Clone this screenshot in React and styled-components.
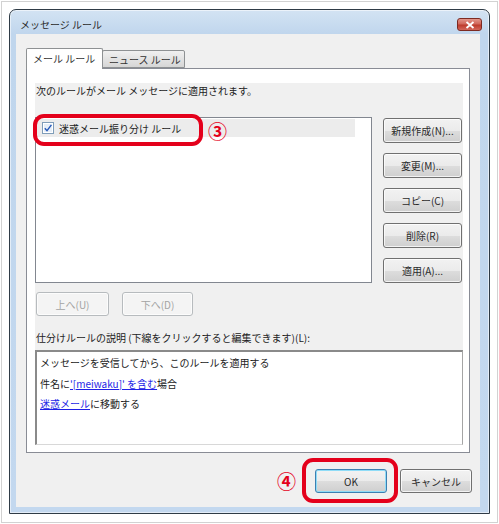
import React from "react";
import styled, { createGlobalStyle } from "styled-components";

const GlobalStyle = createGlobalStyle`
  html, body {
    margin: 0;
    padding: 0;
    background: #fff;
  }
  body {
    font-family: "Noto Sans CJK JP", "Noto Sans", sans-serif;
    font-size: 10px;
    color: #222;
  }
`;

const Page = styled.div`
  box-sizing: border-box;
  width: 497px;
  height: 522px;
  margin: 1px;
  border: 1px solid #d2d2d2;
  padding: 7px;
`;

const Window = styled.div`
  box-sizing: border-box;
  width: 481px;
  height: 505px;
  border: 1px solid #2f3b46;
  border-radius: 7px 7px 0 0;
  background: linear-gradient(180deg, #d3e3f3 0px, #c0d6ed 24px, #c3d8ef 100%);
  box-shadow: inset 0 0 0 1px rgba(255, 255, 255, 0.55);
  display: flex;
  flex-direction: column;
`;

const TitleBar = styled.div`
  height: 24px;
  display: flex;
  justify-content: space-between;
  align-items: flex-start;
  padding-left: 10px;
`;

const Title = styled.span`
  padding-top: 8px;
  line-height: 14px;
  color: #2a2a2a;
`;

const CloseButton = styled.div`
  width: 25px;
  height: 13px;
  margin: 8px 7px 0 0;
  box-sizing: border-box;
  border: 1px solid #7d2a22;
  border-radius: 3px;
  background: linear-gradient(180deg, #e3958a 0%, #d0675a 45%, #bd3b2c 55%, #d3675a 100%);
  display: flex;
  align-items: center;
  justify-content: center;
`;

const Body = styled.div`
  flex: 1;
  margin: 0 9px 6px 6px;
  background: #f0f0f0;
  padding: 14px 10px 0 10px;
  display: flex;
  flex-direction: column;
`;

const TabRow = styled.div`
  display: flex;
  align-items: flex-end;
  height: 20px;
  position: relative;
  z-index: 1;
`;

const Tab = styled.div`
  box-sizing: border-box;
  width: ${(p) => p.$width}px;
  height: ${(p) => (p.$active ? 21 : 18)}px;
  margin-bottom: ${(p) => (p.$active ? -1 : 0)}px;
  margin-left: ${(p) => (p.$active ? 0 : -1)}px;
  border: 1px solid #8e9193;
  border-bottom: ${(p) => (p.$active ? "none" : "1px solid #8e9193")};
  border-radius: 2px 2px 0 0;
  background: ${(p) =>
    p.$active ? "#fff" : "linear-gradient(180deg, #f0f0f0 0%, #e3e3e3 50%, #d6d6d6 100%)"};
  padding-left: 6px;
  line-height: ${(p) => (p.$active ? 19 : 17)}px;
  color: #333;
  white-space: nowrap;
`;

const Panel = styled.div`
  box-sizing: border-box;
  width: 444px;
  height: 385px;
  border: 1px solid #898c95;
  background: #fff;
  padding: 14px 6px 7px 8px;
`;

const Inner = styled.div`
  height: 362px;
  background: #f0f0f0;
  display: flex;
  flex-direction: column;
`;

const Caption = styled.div`
  height: ${(p) => p.$h || 14}px;
  margin-top: ${(p) => p.$mt || 0}px;
  padding: ${(p) => p.$pt || 0}px 1px 0;
  box-sizing: border-box;
  line-height: 14px;
  color: #222;
  white-space: nowrap;
`;

const ListRow = styled.div`
  display: flex;
  height: 166px;
`;

const ListBox = styled.div`
  position: relative;
  box-sizing: border-box;
  width: 337px;
  height: 166px;
  border: 1px solid #828790;
  background: #fff;
  padding: 1px;
`;

const Item = styled.div`
  width: 318px;
  height: 18px;
  background: #ececec;
  display: flex;
  align-items: center;
  gap: 5px;
  padding-left: 5px;
  box-sizing: border-box;
  color: #222;
`;

const Ring = styled.div`
  position: absolute;
  box-sizing: border-box;
  left: ${(p) => p.$x}px;
  top: ${(p) => p.$y}px;
  width: ${(p) => p.$w}px;
  height: ${(p) => p.$h}px;
  border: 4px solid #e4001b;
  border-radius: 11px;
  pointer-events: none;
`;

const Marker = styled.span`
  position: absolute;
  left: ${(p) => p.$x}px;
  top: ${(p) => p.$y}px;
  font-family: "Noto Sans CJK JP", "DejaVu Sans", sans-serif;
  font-size: 19px;
  font-weight: 700;
  line-height: 19px;
  color: #e4001b;
`;

const SideButtons = styled.div`
  margin-left: 11px;
  padding-top: 1px;
  display: flex;
  flex-direction: column;
  gap: 10px;
`;

const Button = styled.button`
  box-sizing: border-box;
  width: ${(p) => p.$w || 79}px;
  height: ${(p) => p.$h || 25}px;
  padding: 0;
  border: 1px solid ${(p) => (p.$disabled ? "#b7bbbe" : p.$focus ? "#3c7fb1" : "#707070")};
  border-radius: 3px;
  background: ${(p) =>
    p.$disabled
      ? "#f4f4f4"
      : "linear-gradient(180deg, #f2f2f2 0%, #ebebeb 50%, #dddddd 51%, #cfcfcf 100%)"};
  box-shadow: inset 0 0 0 1px ${(p) => (p.$focus ? "#8fdcf7" : "rgba(255,255,255,0.75)")};
  font-family: inherit;
  font-size: 10px;
  color: ${(p) => (p.$disabled ? "#a3a3a3" : "#2a2a2a")};
  white-space: nowrap;
`;

const MoveRow = styled.div`
  display: flex;
  gap: 13px;
  margin-top: 9px;
  padding-left: 1px;
`;

const DescBox = styled.div`
  box-sizing: border-box;
  margin-top: 5px;
  height: 95px;
  border-top: 2px solid #8a8a8a;
  border-left: 2px solid #8a8a8a;
  border-right: 1px solid #a5a5a5;
  border-bottom: 1px solid #d8d8d8;
  background: #fff;
  padding: 1px 0 0 3px;
`;

const DescLine = styled.div`
  line-height: 20.5px;
  color: #222;
  white-space: nowrap;
`;

const RuleLink = styled.span`
  color: #1f1fe6;
  text-decoration: underline;
`;

const Footer = styled.div`
  display: flex;
  justify-content: flex-end;
  gap: 13px;
  padding-top: 16px;
  margin-right: -2px;
`;

const OkWrap = styled.div`
  position: relative;
  display: flex;
`;

const CheckMark = () => (
  <svg width="12" height="12" viewBox="0 0 12 12">
    <rect x="0.5" y="0.5" width="11" height="11" fill="#fff" stroke="#7f9db9" />
    <rect x="2" y="2" width="8" height="8" fill="#e6eef7" />
    <path d="M2.8 6.2 L5 8.6 L9.4 2.8" fill="none" stroke="#2457b8" strokeWidth="1.4" />
  </svg>
);

const CloseGlyph = () => (
  <svg width="10" height="8" viewBox="0 0 10 8">
    <path d="M1.5 1 L8.5 7 M8.5 1 L1.5 7" stroke="#fff" strokeWidth="1.8" />
  </svg>
);

const sideButtons = ["新規作成(N)...", "変更(M)...", "コピー(C)", "削除(R)", "適用(A)..."];

export default function App() {
  return (
    <>
      <GlobalStyle />
      <Page>
        <Window>
          <TitleBar>
            <Title>メッセージ ルール</Title>
            <CloseButton>
              <CloseGlyph />
            </CloseButton>
          </TitleBar>
          <Body>
            <TabRow>
              <Tab $active $width={77}>メール ルール</Tab>
              <Tab $width={83}>ニュース ルール</Tab>
            </TabRow>
            <Panel>
              <Inner>
                <Caption $h={34} $pt={1}>次のルールがメール メッセージに適用されます。</Caption>
                <ListRow>
                  <ListBox>
                    <Item>
                      <CheckMark />
                      <span>迷惑メール振り分け ルール</span>
                    </Item>
                    <Ring $x={-3} $y={-4} $w={170} $h={32} />
                    <Marker $x={172} $y={3}>③</Marker>
                  </ListBox>
                  <SideButtons>
                    {sideButtons.map((label) => (
                      <Button key={label}>{label}</Button>
                    ))}
                  </SideButtons>
                </ListRow>
                <MoveRow>
                  <Button $disabled $w={73} $h={24}>上へ(U)</Button>
                  <Button $disabled $w={71} $h={24}>下へ(D)</Button>
                </MoveRow>
                <Caption $mt={15}>仕分けルールの説明 (下線をクリックすると編集できます)(L):</Caption>
                <DescBox>
                  <DescLine>メッセージを受信してから、このルールを適用する</DescLine>
                  <DescLine>
                    件名に<RuleLink>'[meiwaku]' を含む</RuleLink>場合
                  </DescLine>
                  <DescLine>
                    <RuleLink>迷惑メール</RuleLink>に移動する
                  </DescLine>
                </DescBox>
              </Inner>
            </Panel>
            <Footer>
              <OkWrap>
                <Button $focus $w={72} $h={24}>OK</Button>
                <Ring $x={-13} $y={-11} $w={96} $h={45} />
                <Marker $x={-38} $y={2}>④</Marker>
              </OkWrap>
              <Button $w={72} $h={24}>キャンセル</Button>
            </Footer>
          </Body>
        </Window>
      </Page>
    </>
  );
}
